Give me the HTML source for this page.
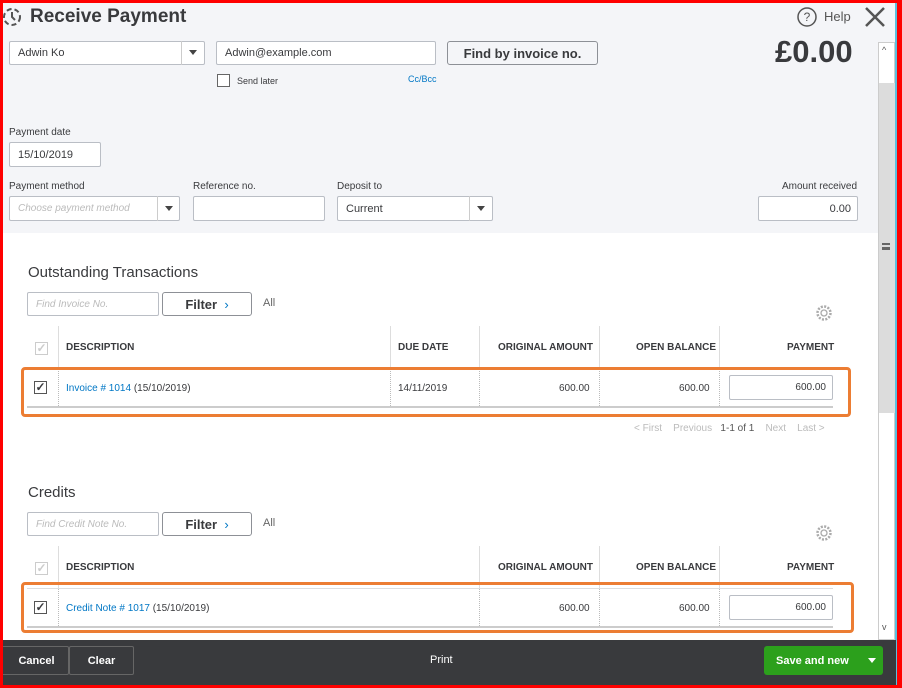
<!DOCTYPE html>
<html><head><meta charset="utf-8"><style>
*{box-sizing:border-box;margin:0;padding:0}
body{width:902px;height:688px;overflow:hidden;font-family:"Liberation Sans",sans-serif;background:#fff;position:relative;color:#393a3d}
.a{position:absolute}
.inp{position:absolute;background:#fff;border:1px solid #babec5;border-radius:2px;font-size:11px;padding-left:8px;display:flex;align-items:center}
.lbl{position:absolute;font-size:10px;color:#393a3d}
.th{position:absolute;font-size:10px;font-weight:bold;color:#393a3d}
.td{position:absolute;font-size:10px;color:#393a3d}
.blue{color:#0077c5}
.cb{position:absolute;width:13px;height:13px;border:1px solid #555;background:#fff;font-size:12px;line-height:11px;text-align:center;font-weight:bold}
.vl{position:absolute;width:1px;background:#ddd}
.dl{position:absolute;width:0;border-left:1px dotted #bbb}
.btn{position:absolute;border:1px solid #8d9096;border-radius:3px;background:#fff;font-size:13px;font-weight:bold;display:flex;align-items:center;justify-content:center}
</style></head><body>
<div class="a" style="left:0;top:0;width:902px;height:233px;background:#f4f5f8"></div>
<svg class="a" style="left:2px;top:6px" width="20" height="22"><circle cx="10" cy="11" r="8" fill="none" stroke="#555" stroke-width="2" stroke-dasharray="5 3"/><path d="M10 6v5l3 3" stroke="#555" stroke-width="2" fill="none"/></svg>
<div class="a" style="left:30px;top:6px;font-size:19px;font-weight:bold;color:#393a3d">Receive Payment</div>
<svg class="a" style="left:796px;top:6px" width="22" height="22"><circle cx="11" cy="11" r="9" fill="none" stroke="#555" stroke-width="1.5"/><text x="11" y="15" font-size="12" text-anchor="middle" fill="#555" font-family="Liberation Sans">?</text></svg>
<div class="a" style="left:824px;top:9px;font-size:13px;color:#555">Help</div>
<svg class="a" style="left:864px;top:6px" width="22" height="22"><path d="M2 2L20 20M20 2L2 20" stroke="#555" stroke-width="2.5"/></svg>
<div class="inp" style="left:9px;top:41px;width:196px;height:24px">Adwin Ko</div>
<div class="a" style="left:181px;top:41px;width:1px;height:24px;background:#ccc"></div>
<div class="a" style="left:189px;top:50px;border:4px solid transparent;border-top:5px solid #444;border-bottom:0"></div>
<div class="inp" style="left:216px;top:41px;width:220px;height:24px">Adwin@example.com</div>
<div class="btn" style="left:447px;top:41px;width:151px;height:24px;background:#f4f5f8">Find by invoice no.</div>
<div class="a" style="left:775px;top:34px;font-size:31px;font-weight:bold;color:#393a3d">£0.00</div>
<div class="a" style="left:217px;top:74px;width:13px;height:13px;border:1px solid #666;background:#fff"></div>
<div class="a" style="left:237px;top:76px;font-size:9px">Send later</div>
<div class="a blue" style="left:408px;top:74px;font-size:9px">Cc/Bcc</div>
<div class="lbl" style="left:9px;top:127px">Payment date</div>
<div class="inp" style="left:9px;top:142px;width:92px;height:25px">15/10/2019</div>
<div class="lbl" style="left:9px;top:181px">Payment method</div>
<div class="inp" style="left:9px;top:196px;width:171px;height:25px;color:#bbb;font-style:italic;font-size:10px">Choose payment method</div>
<div class="a" style="left:157px;top:196px;width:1px;height:25px;background:#ccc"></div>
<div class="a" style="left:165px;top:206px;border:4px solid transparent;border-top:5px solid #444;border-bottom:0"></div>
<div class="lbl" style="left:193px;top:181px">Reference no.</div>
<div class="inp" style="left:193px;top:196px;width:132px;height:25px"></div>
<div class="lbl" style="left:337px;top:181px">Deposit to</div>
<div class="inp" style="left:337px;top:196px;width:156px;height:25px">Current</div>
<div class="a" style="left:469px;top:196px;width:1px;height:25px;background:#ccc"></div>
<div class="a" style="left:477px;top:206px;border:4px solid transparent;border-top:5px solid #444;border-bottom:0"></div>
<div class="lbl" style="left:782px;top:181px">Amount received</div>
<div class="inp" style="left:758px;top:196px;width:100px;height:25px;justify-content:flex-end;padding-right:6px">0.00</div>

<div class="a" style="left:28px;top:264px;font-size:15px">Outstanding Transactions</div>
<div class="inp" style="left:27px;top:292px;width:132px;height:24px;color:#bbb;font-style:italic;font-size:10px">Find Invoice No.</div>
<div class="btn" style="left:162px;top:292px;width:90px;height:24px">Filter&nbsp;&nbsp;<span class="blue" style="font-weight:normal">›</span></div>
<div class="a" style="left:263px;top:297px;font-size:11px;color:#666">All</div>
<svg class="a" style="left:815px;top:304px" width="18" height="18"><circle cx="9" cy="9" r="3" fill="none" stroke="#aaa" stroke-width="1.3"/><circle cx="9" cy="9" r="6.5" fill="none" stroke="#aaa" stroke-width="2.5" stroke-dasharray="2 1.4"/></svg>

<div class="vl" style="left:58px;top:326px;height:42px"></div>
<div class="vl" style="left:390px;top:326px;height:42px"></div>
<div class="vl" style="left:479px;top:326px;height:42px"></div>
<div class="vl" style="left:599px;top:326px;height:42px"></div>
<div class="vl" style="left:719px;top:326px;height:42px"></div>
<div class="cb" style="left:35px;top:342px;border-color:#ccc;color:#ccc">✓</div>
<div class="th" style="left:66px;top:342px">DESCRIPTION</div>
<div class="th" style="left:398px;top:342px">DUE DATE</div>
<div class="th" style="left:498px;top:342px">ORIGINAL AMOUNT</div>
<div class="th" style="left:636px;top:342px">OPEN BALANCE</div>
<div class="th" style="left:787px;top:342px">PAYMENT</div>
<div class="a" style="left:27px;top:368px;width:806px;height:1px;background:#ddd"></div>
<div class="a" style="left:27px;top:406px;width:806px;height:2px;background:#ccc"></div>
<div class="dl" style="left:58px;top:369px;height:37px"></div>
<div class="dl" style="left:390px;top:369px;height:37px"></div>
<div class="dl" style="left:479px;top:369px;height:37px"></div>
<div class="dl" style="left:599px;top:369px;height:37px"></div>
<div class="dl" style="left:719px;top:369px;height:37px"></div>
<div class="cb" style="left:34px;top:381px">✓</div>
<div class="td" style="left:66px;top:383px"><span class="blue">Invoice # 1014</span> (15/10/2019)</div>
<div class="td" style="left:398px;top:383px">14/11/2019</div>
<div class="td" style="left:559px;top:383px">600.00</div>
<div class="td" style="left:679px;top:383px">600.00</div>
<div class="inp" style="left:729px;top:375px;width:104px;height:25px;font-size:10px;justify-content:flex-end;padding-right:6px">600.00</div>
<div class="a" style="left:21px;top:367px;width:830px;height:50px;border:3px solid #ec7d33;border-radius:4px"></div>
<div class="a" style="left:634px;top:423px;font-size:10px;color:#bbb">&lt; First&nbsp;&nbsp;&nbsp; Previous&nbsp;&nbsp; <span style="color:#555">1-1 of 1</span>&nbsp;&nbsp;&nbsp; Next&nbsp;&nbsp;&nbsp; Last &gt;</div>

<div class="a" style="left:28px;top:484px;font-size:15px">Credits</div>
<div class="inp" style="left:27px;top:512px;width:132px;height:24px;color:#bbb;font-style:italic;font-size:10px">Find Credit Note No.</div>
<div class="btn" style="left:162px;top:512px;width:90px;height:24px">Filter&nbsp;&nbsp;<span class="blue" style="font-weight:normal">›</span></div>
<div class="a" style="left:263px;top:517px;font-size:11px;color:#666">All</div>
<svg class="a" style="left:815px;top:524px" width="18" height="18"><circle cx="9" cy="9" r="3" fill="none" stroke="#aaa" stroke-width="1.3"/><circle cx="9" cy="9" r="6.5" fill="none" stroke="#aaa" stroke-width="2.5" stroke-dasharray="2 1.4"/></svg>
<div class="vl" style="left:58px;top:546px;height:42px"></div>
<div class="vl" style="left:479px;top:546px;height:42px"></div>
<div class="vl" style="left:599px;top:546px;height:42px"></div>
<div class="vl" style="left:719px;top:546px;height:42px"></div>
<div class="cb" style="left:35px;top:562px;border-color:#ccc;color:#ccc">✓</div>
<div class="th" style="left:66px;top:562px">DESCRIPTION</div>
<div class="th" style="left:498px;top:562px">ORIGINAL AMOUNT</div>
<div class="th" style="left:636px;top:562px">OPEN BALANCE</div>
<div class="th" style="left:787px;top:562px">PAYMENT</div>
<div class="a" style="left:27px;top:588px;width:806px;height:1px;background:#ddd"></div>
<div class="a" style="left:27px;top:626px;width:806px;height:2px;background:#ccc"></div>
<div class="dl" style="left:58px;top:589px;height:37px"></div>
<div class="dl" style="left:479px;top:589px;height:37px"></div>
<div class="dl" style="left:599px;top:589px;height:37px"></div>
<div class="dl" style="left:719px;top:589px;height:37px"></div>
<div class="cb" style="left:34px;top:601px">✓</div>
<div class="td" style="left:66px;top:603px"><span class="blue">Credit Note # 1017</span> (15/10/2019)</div>
<div class="td" style="left:559px;top:603px">600.00</div>
<div class="td" style="left:679px;top:603px">600.00</div>
<div class="inp" style="left:729px;top:595px;width:104px;height:25px;font-size:10px;justify-content:flex-end;padding-right:6px">600.00</div>
<div class="a" style="left:21px;top:582px;width:833px;height:51px;border:3px solid #ec7d33;border-radius:4px"></div>

<!-- scrollbar -->
<div class="a" style="left:878px;top:42px;width:17px;height:598px;background:#fff;border:1px solid #ccc"></div>
<div class="a" style="left:879px;top:83px;width:16px;height:330px;background:#dcdcdc"></div>
<div class="a" style="left:882px;top:45px;font-size:9px;color:#555">^</div>
<div class="a" style="left:882px;top:622px;font-size:9px;color:#555">v</div>
<div class="a" style="left:882px;top:243px;width:8px;height:7px;border-top:2px solid #666;border-bottom:2px solid #666"><div style="margin-top:1.5px;height:2px;background:#666"></div></div>
<div class="a" style="left:895px;top:3px;width:2px;height:682px;background:#5bc0de"></div>

<!-- footer -->
<div class="a" style="left:0;top:640px;width:896px;height:45px;background:#393a3d"></div>
<div class="a" style="left:0;top:646px;width:69px;height:29px;border:1px solid #666;border-radius:2px;color:#fff;font-size:11px;font-weight:bold;display:flex;align-items:center;justify-content:center;padding-left:4px">Cancel</div>
<div class="a" style="left:69px;top:646px;width:65px;height:29px;border:1px solid #666;border-radius:2px;color:#fff;font-size:11px;font-weight:bold;display:flex;align-items:center;justify-content:center">Clear</div>
<div class="a" style="left:430px;top:654px;color:#fff;font-size:11px">Print</div>
<div class="a" style="left:764px;top:646px;width:119px;height:29px;background:#2ca01c;border-radius:3px;color:#fff;font-size:11px;font-weight:bold;display:flex;align-items:center;padding-left:12px">Save and new</div>
<div class="a" style="left:868px;top:658px;border:4px solid transparent;border-top:5px solid #fff;border-bottom:0"></div>
<div class="a" style="left:0;top:685px;width:902px;height:3px;background:#ddd"></div>

<!-- red frame -->
<div class="a" style="left:0;top:0;width:902px;height:688px;border-style:solid;border-color:#f00;border-width:3px 5px 3px 3px"></div>
</body></html>
